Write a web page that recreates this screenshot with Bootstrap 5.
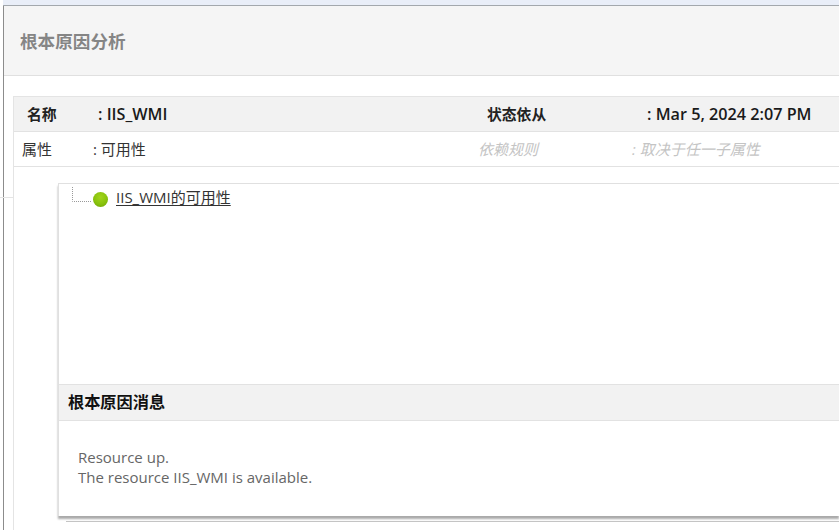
<!DOCTYPE html>
<html lang="zh">
<head>
<meta charset="utf-8">
<title>根本原因分析</title>
<link rel="stylesheet" href="https://cdn.jsdelivr.net/npm/bootstrap@5.3.0/dist/css/bootstrap.min.css">
<style>
html,body{height:530px;overflow:hidden}
body{background:#fff;font-family:"Open Sans","Noto Sans CJK SC",sans-serif;position:relative}
.side-rule{position:absolute;left:0;top:197px;width:13px;height:1px;background:#e4e4e4}
.top-strip{height:6px;margin-left:3px;background:#e9eef8;border-bottom:1px solid #a3a8ad}
.shell{height:524px;margin-left:3px;border-left:1px solid #8c8c8c}
.head-bar{height:70px;background:#f5f5f5;border-bottom:1px solid #e0e0e0;padding-left:16px}
.head-bar h1{font-size:17.6px;font-weight:700;color:#858585;margin:0;font-family:"Noto Sans CJK SC",sans-serif}
.content-box{margin:20px 0 0 9px;height:434px;border-left:1px solid #e4e4e4;border-top:1px solid #e4e4e4}
.info-row{height:35px;border-bottom:1px solid #e2e2e2}
.info-row.shade{background:#f2f2f2;color:#222}
.info-row.shade .lbl{font-size:14.8px;font-family:"Noto Sans CJK SC",sans-serif;font-weight:700}
.info-row.shade .val{font-size:16.2px;font-weight:600;color:#1a1a1a}
.info-row.plain{color:#333;font-size:15px}
.c1{width:84px;padding-left:13px;flex:none}
.c1b{width:79px;padding-left:8px;flex:none}
.c2{width:389px;flex:none}
.c2b{width:385px;flex:none}
.c3{width:160px;flex:none}
.c3b{width:154px;flex:none}
.ghost-cell{color:#c4c4c4;font-style:italic}
.tree-panel{margin:16px 0 0 44px;height:333px;border-left:1px solid #e0e0e0;border-top:1px solid #e0e0e0;box-shadow:0 3px 2px 0 #aaa;display:flex;flex-direction:column}
.tree-area{height:200px;padding-left:13px;padding-top:3px}
.tree-link{color:#333;font-size:15px;line-height:22px;text-decoration:underline;text-underline-offset:2px;margin-top:-1px}
.dot{width:15px;height:15px;border-radius:50%;background:radial-gradient(circle at 50% 35%,#a2d41c 0,#88c20c 55%,#6e9f08 100%);flex:none;margin-top:5px}
.msg-title{height:37px;background:#f2f2f2;border-top:1px solid #e2e2e2;border-bottom:1px solid #e2e2e2;padding:0 0 3px 9px;font-size:16.2px;font-weight:700;color:#111;font-family:"Noto Sans CJK SC",sans-serif}
.msg-body{padding:26px 0 0 19px;font-size:15px;line-height:20px;color:#666}
.under-line{position:absolute;left:66px;right:0;top:521px;height:1px;background:#c4c4c4}
</style>
</head>
<body>
<div class="side-rule"></div>
<div class="top-strip"></div>
<div class="shell">
  <div class="head-bar d-flex align-items-center"><h1>根本原因分析</h1></div>
  <div class="content-box">
    <div class="info-row shade d-flex align-items-center">
      <div class="c1 lbl">名称</div>
      <div class="c2 val">: IIS_WMI</div>
      <div class="c3 lbl">状态依从</div>
      <div class="val text-nowrap">: Mar 5, 2024 2:07 PM</div>
    </div>
    <div class="info-row plain d-flex align-items-center">
      <div class="c1b">属性</div>
      <div class="c2b">: 可用性</div>
      <div class="c3b ghost-cell">依赖规则</div>
      <div class="ghost-cell text-nowrap">: 取决于任一子属性</div>
    </div>
    <div class="tree-panel">
      <div class="tree-area d-flex align-items-start">
        <svg width="21" height="20" viewBox="0 0 21 20" class="flex-none"><path d="M.5 0V14.5H20" fill="none" stroke="#999" stroke-dasharray="1 1"/></svg>
        <span class="dot"></span>
        <a href="#" class="tree-link ms-2">IIS_WMI的可用性</a>
      </div>
      <div class="msg-title d-flex align-items-center">根本原因消息</div>
      <div class="msg-body">Resource up.<br>The resource IIS_WMI is available.</div>
    </div>
  </div>
</div>
<div class="under-line"></div>
</body>
</html>
